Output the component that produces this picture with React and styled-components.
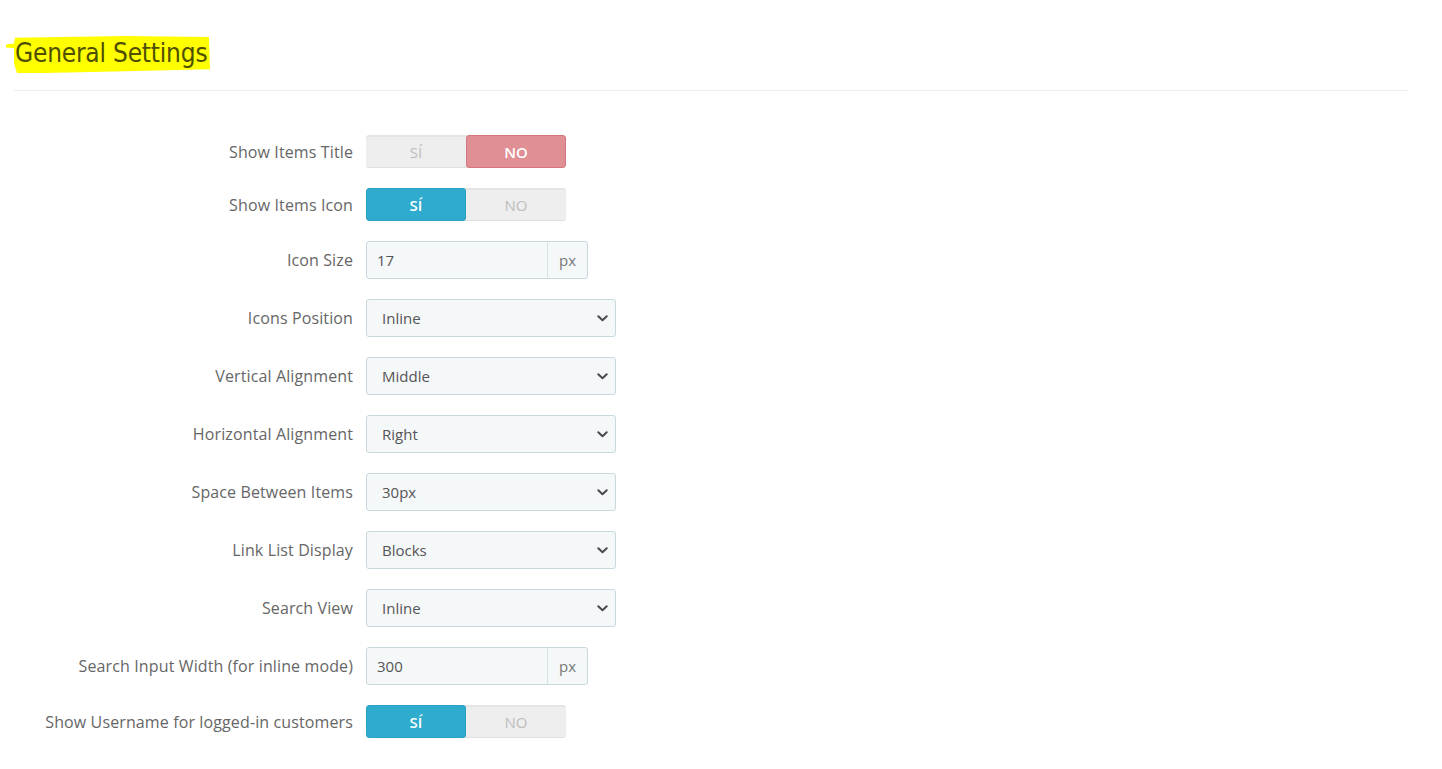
import React from 'react';
import styled, { createGlobalStyle } from 'styled-components';

const GlobalStyle = createGlobalStyle`
  html, body {
    margin: 0;
    padding: 0;
    background: #fff;
  }
  body {
    font-family: 'Open Sans', sans-serif;
  }
`;

const settings = [
  { label: 'Show Items Title', type: 'switch', value: false },
  { label: 'Show Items Icon', type: 'switch', value: true },
  { label: 'Icon Size', type: 'suffix', value: '17', suffix: 'px' },
  { label: 'Icons Position', type: 'select', value: 'Inline' },
  { label: 'Vertical Alignment', type: 'select', value: 'Middle' },
  { label: 'Horizontal Alignment', type: 'select', value: 'Right' },
  { label: 'Space Between Items', type: 'select', value: '30px' },
  { label: 'Link List Display', type: 'select', value: 'Blocks' },
  { label: 'Search View', type: 'select', value: 'Inline' },
  { label: 'Search Input Width (for inline mode)', type: 'suffix', value: '300', suffix: 'px' },
  { label: 'Show Username for logged-in customers', type: 'switch', value: true },
];

const Chevron = () => (
  <svg width="11" height="7" viewBox="0 0 11 7">
    <path d="M1.3 1.3 L5.5 5.3 L9.7 1.3" fill="none" stroke="#4a4a4a" strokeWidth="2" strokeLinecap="round" strokeLinejoin="round" />
  </svg>
);

const Switch = ({ on }) => (
  <SwitchBox>
    <SwitchHalf active={on} tone="yes">SÍ</SwitchHalf>
    <SwitchHalf active={!on} tone="no">NO</SwitchHalf>
  </SwitchBox>
);

const Control = ({ item }) => {
  if (item.type === 'switch') return <Switch on={item.value} />;
  if (item.type === 'suffix') {
    return (
      <InputGroup>
        <TextInput>{item.value}</TextInput>
        <Addon>{item.suffix}</Addon>
      </InputGroup>
    );
  }
  return (
    <SelectBox>
      <span>{item.value}</span>
      <Chevron />
    </SelectBox>
  );
};

const App = () => {
  return (
    <Page>
      <GlobalStyle />
      <Header>
        <TitleWrap>
          {/* highlighter stroke behind the heading */}
          <Marker viewBox="0 0 206 42" preserveAspectRatio="none">
            <path
              d="M10 3 L120 1 L204 2 L205 36 L120 38 L40 40 L12 40 L9 30 L9 14 L1 13 L1 10 L9 9 Z"
              fill="#ffff00"
            />
          </Marker>
          <Title>General Settings</Title>
        </TitleWrap>
      </Header>
      <Divider />
      <Form>
        {settings.map((item) => (
          <FormRow key={item.label}>
            <Label>{item.label}</Label>
            <Control item={item} />
          </FormRow>
        ))}
      </Form>
    </Page>
  );
};

const Page = styled.div`
  width: 1442px;
  min-height: 769px;
  padding: 0 34px 0 14px;
  box-sizing: border-box;
  color: #555;
`;

const Header = styled.div`
  padding-top: 33px;
  height: 90px;
  box-sizing: border-box;
`;

const TitleWrap = styled.div`
  position: relative;
  display: inline-block;
  margin-left: 1px;
`;

const Marker = styled.svg`
  position: absolute;
  left: -10px;
  top: 2px;
  width: 206px;
  height: 40px;
  z-index: 0;
`;

const Title = styled.h1`
  position: relative;
  z-index: 1;
  margin: 0;
  font-family: 'Ubuntu Condensed', 'DejaVu Sans Condensed', 'Liberation Sans Narrow', 'DejaVu Sans', sans-serif;
  font-stretch: condensed;
  font-weight: 400;
  font-size: 26px;
  line-height: 40px;
  letter-spacing: -0.2px;
  color: #4f4f00;
`;

const Divider = styled.hr`
  margin: 0;
  border: 0;
  border-top: 1px solid #ececec;
  width: 1394px;
`;

const Form = styled.div`
  display: flex;
  flex-direction: column;
  gap: 20px;
  padding-top: 44px;
`;

const FormRow = styled.div`
  display: flex;
  align-items: center;
  gap: 13px;
`;

const Label = styled.div`
  width: 339px;
  text-align: right;
  font-size: 16px;
  letter-spacing: 0.12px;
  color: #666;
  white-space: nowrap;
`;

const SwitchBox = styled.div`
  display: flex;
  width: 200px;
  height: 33px;
  border-radius: 3px;
  background: #eee;
  box-shadow: inset 0 2px 0 rgba(0, 0, 0, 0.04), inset 0 -1px 0 rgba(0, 0, 0, 0.06);
  overflow: hidden;
`;

const SwitchHalf = styled.div`
  flex: 1;
  display: flex;
  align-items: center;
  justify-content: center;
  font-size: 15px;
  box-sizing: border-box;
  border-radius: 3px;
  font-weight: ${(p) => (p.active ? 600 : 400)};
  color: ${(p) => (p.active ? '#fff' : '#bdbdbd')};
  background: ${(p) => (!p.active ? 'transparent' : p.tone === 'yes' ? '#2eabcd' : '#e08f95')};
  border: 1px solid ${(p) => (!p.active ? 'transparent' : p.tone === 'yes' ? '#2aa1c2' : '#d4767d')};
`;

const InputGroup = styled.div`
  display: flex;
  width: 222px;
  height: 38px;
  border: 1px solid #c9d8dd;
  border-radius: 3px;
  background: #f5f8f9;
  box-sizing: border-box;
  font-size: 15px;
`;

const TextInput = styled.div`
  flex: 1;
  display: flex;
  align-items: center;
  padding-left: 10px;
  color: #555;
`;

const Addon = styled.div`
  width: 39px;
  display: flex;
  align-items: center;
  justify-content: center;
  border-left: 1px solid #d6e1e5;
  color: #777;
`;

const SelectBox = styled.div`
  display: flex;
  align-items: center;
  justify-content: space-between;
  width: 250px;
  height: 38px;
  padding: 0 7px 0 15px;
  box-sizing: border-box;
  border: 1px solid #c9d8dd;
  border-radius: 3px;
  background: #f5f8f9;
  font-size: 15px;
  color: #555;
`;

export default App;
